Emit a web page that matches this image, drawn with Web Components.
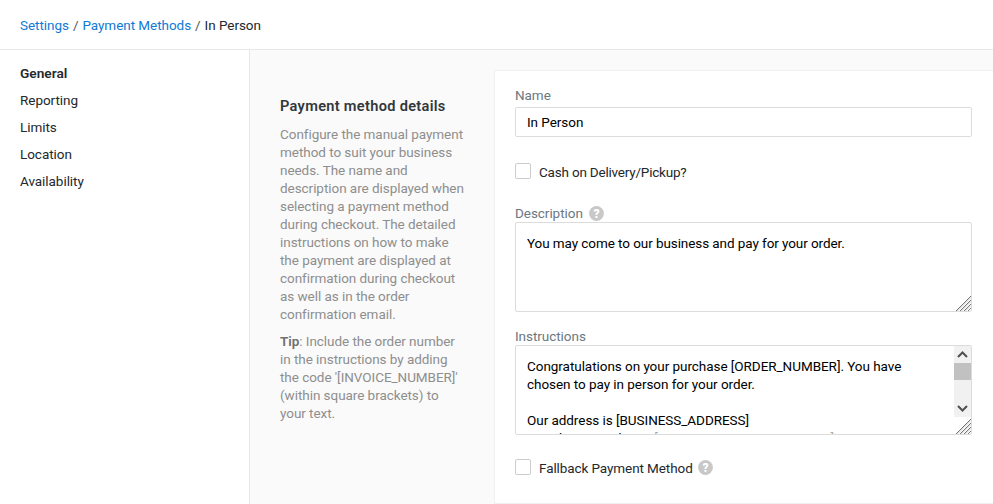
<!DOCTYPE html>
<html><head><meta charset="utf-8"><style>
html,body{margin:0;height:100%;overflow:hidden}
body{font:13.5px/18px Roboto,"Liberation Sans",sans-serif;letter-spacing:-.05px;color:#23282d;background:#fff}
</style></head><body>
<app-shell>
<crumb-bar></crumb-bar>
<side-nav slot="nav"></side-nav>
<details-intro slot="intro"></details-intro>
<form-card slot="card"></form-card>
</app-shell>
<script>
const HELP='<svg width="15" height="15" viewBox="0 0 15 15" style="flex:none"><circle cx="7.5" cy="7.5" r="7.4" fill="#c8c8c8"/><text x="7.5" y="11.7" text-anchor="middle" font-family="Roboto,sans-serif" font-size="12" font-weight="900" fill="#fff">?</text></svg>';
const GRIP='<svg width="16" height="16" viewBox="0 0 16 16"><path d="M16 1 1 16M16 5 5 16M16 9 9 16M16 13 13 16" stroke="#777" stroke-width="1" fill="none"/><path d="M16 2.4 2.4 16M16 6.4 6.4 16M16 10.4 10.4 16" stroke="#ccc" stroke-width="1" fill="none"/></svg>';
function def(name,html){customElements.define(name,class extends HTMLElement{constructor(){super();this.attachShadow({mode:'open'}).innerHTML=html}})}
def('app-shell',`<style>:host{display:grid;grid-template:50px 1fr/250px 1fr;height:504px}
header{grid-column:1/3}nav{border-right:1px solid #e8e8e8}
main{background:#fafafa;display:flex;padding:20px 0 0 30px;min-width:0;overflow:hidden}
</style><header><slot></slot></header><nav><slot name="nav"></slot></nav><main><slot name="intro"></slot><slot name="card"></slot></main>`);
def('crumb-bar',`<style>:host{display:flex;align-items:center;gap:4px;height:49px;padding:0 20px;border-bottom:1px solid #e8e8e8;box-sizing:content-box}
a{color:#0f7ad5;text-decoration:none}i{font-style:normal;color:#555}</style>
<a href="#">Settings</a><i>/</i><a href="#">Payment Methods</a><i>/</i><span>In Person</span>`);
def('side-nav',`<style>:host{display:flex;flex-direction:column;gap:9px;padding:14px 20px}b{font-weight:600;font-size:13.7px;letter-spacing:0}</style>
<b>General</b><span>Reporting</span><span>Limits</span><span>Location</span><span>Availability</span>`);
def('details-intro',`<style>:host{display:block;width:186px;margin-right:28px;padding-top:27px;color:#8e8e8e}
h2{margin:0 0 10px;font-size:14.6px;line-height:18px;font-weight:600;color:#32373c;letter-spacing:.3px}
p{margin:0 0 9px}b{font-weight:600;color:#6f6f6f}</style>
<h2>Payment method details</h2>
<p>Configure the manual payment method to suit your business needs. The name and description are displayed when selecting a payment method during checkout. The detailed instructions on how to make the payment are displayed at confirmation during checkout as well as in the order confirmation email.</p>
<p><b>Tip</b>: Include the order number in the instructions by adding the code '[INVOICE_NUMBER]' (within square brackets) to your text.</p>`);
def('form-card',`<style>:host{display:block;flex:none;width:499px;height:434px;box-sizing:border-box;background:#fff;border:1px solid #f0f0f0;border-width:1px 0 1px 1px;padding:15px 20px 0}
label{display:flex;align-items:center;gap:6px;color:#6c7781;height:18px}
.in{border:1px solid #dcdcdc;border-radius:2px;width:457px;box-sizing:border-box;color:#000;padding:0 11px}
.name{height:30px;line-height:28px;margin-top:3px}
.ck{display:flex;align-items:center;gap:8px;height:18px}
.ck span.box{width:14px;height:14px;border:1px solid #ccc;border-radius:2px;flex:none}
.ck span.t{padding-top:2px}
.ck svg{margin-left:-3px}
.ta{position:relative;overflow:hidden;height:90px}
.ta .txt{padding-top:11px}
.grip{position:absolute;right:0;bottom:0;width:16px;height:16px;display:block}
.sb{position:absolute;right:0;top:0;width:17px;height:71px;background:#f1f1f1}
.sb svg{position:absolute;left:0;width:17px;height:17px}
.th{position:absolute;left:0;top:17px;width:17px;height:17px;background:#c1c1c1}
</style>
<label>Name</label>
<div class="in name">In Person</div>
<div class="ck" style="margin-top:25px"><span class="box"></span><span class="t" style="letter-spacing:-.2px">Cash on Delivery/Pickup?</span></div>
<label style="margin-top:24px">Description ${HELP}</label>
<div class="in ta"><div class="txt" style="letter-spacing:-.08px">You may come to our business and pay for your order.</div><span class="grip">${GRIP}</span></div>
<label style="margin-top:15px">Instructions</label>
<div class="in ta"><div class="txt" style="width:420px">Congratulations on your purchase [ORDER_NUMBER]. You have chosen to pay in person for your order.<br><br>Our address is [BUSINESS_ADDRESS]<br>Our phone number is <span style="color:#aaa">[BUSINESS_PHONE_NUMBER]</span></div>
<div class="sb"><svg viewBox="0 0 17 17" style="top:0"><path d="M4 11 8.5 6.5 13 11" fill="none" stroke="#505050" stroke-width="2"/></svg><div class="th"></div><svg viewBox="0 0 17 17" style="bottom:0"><path d="M4 6 8.5 10.5 13 6" fill="none" stroke="#505050" stroke-width="2"/></svg></div>
<span class="grip">${GRIP}</span></div>
<div class="ck" style="margin-top:23px"><span class="box"></span><span class="t" style="letter-spacing:-.09px">Fallback Payment Method</span>${HELP}</div>`);
</script>
</body></html>
